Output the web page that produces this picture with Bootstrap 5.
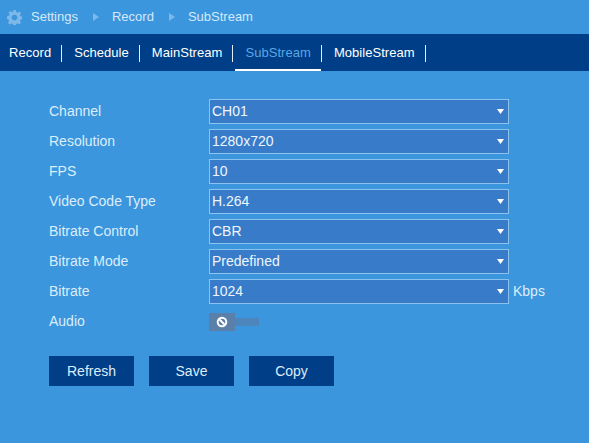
<!DOCTYPE html>
<html lang="en">
<head>
<meta charset="utf-8">
<title>SubStream</title>
<link rel="stylesheet" href="https://cdn.jsdelivr.net/npm/bootstrap@5.3.0/dist/css/bootstrap.min.css">
<style>
html,body{height:100%}
body{background:#3b96dd;color:#e4f1fb;font-family:"Liberation Sans",Arial,sans-serif;font-size:14px;overflow:hidden}
.crumbs{height:34px;padding-left:7px;color:#d5e9f9;font-size:13px}
.crumbs .gear{width:15px;height:15px;margin-right:9px}
.crumbs .sep{width:0;height:0;border-left:6px solid #7cb9ea;border-top:4.5px solid transparent;border-bottom:4.5px solid transparent;margin:0 13px 0 15px}
.tabbar{height:37px;background:#003f87;padding-left:9px}
.tabitem{position:relative;height:37px;color:#fff;text-decoration:none;padding-right:11px;margin-right:12px;font-size:13px;letter-spacing:.05px}
.tabitem::after{content:"";position:absolute;right:0;top:11px;width:1px;height:17px;background:#e6eef7}
.tabitem.on{color:#5aa6e4}
.tabitem.on::before{content:"";position:absolute;left:-10px;right:1px;bottom:0;height:2px;background:#fff}
.formwrap{padding:28px 0 0 49px}
.frow{height:25px;margin-bottom:5px}
.flabel{width:160px;color:#dcedfa;font-size:14px}
.pick{width:300px;height:25px;padding:0 16px 0 2px;border:1px solid #8cc3ee;border-radius:0;background:#387cc9 url("data:image/svg+xml,%3Csvg xmlns='http://www.w3.org/2000/svg' width='8' height='6'%3E%3Cpath d='M0 0h8L4 6z' fill='%23fff'/%3E%3C/svg%3E") no-repeat right 4px center;background-size:7px 5px;color:#eef6fc;font-family:inherit;font-size:14px;line-height:23px;appearance:none;outline:0}
.unit{margin-left:4px;color:#dcedfa}
.toggle{width:50px;height:18px}
.knob{width:26px;height:18px;background:#5a7fa8}
.rail{width:24px;height:8px;background:#4d86bd}
.actions{margin-top:22px}
.actbtn{width:85px;height:30px;background:#003f87;color:#dcedfa;border:0;border-radius:0;font-size:14px;padding:0;margin-right:15px}
</style>
</head>
<body>
<div class="crumbs d-flex align-items-center">
  <svg class="gear" viewBox="0 0 16 16"><path fill="#7fb8e6" fill-rule="evenodd" d="M6.600 0h2.800l.4 2.200 1.300.6 1.900-1.300 2 2-1.300 1.900.6 1.300 2.200.4v2.800l-2.200.4-.6 1.300 1.300 1.900-2 2-1.900-1.300-1.300.6-.4 2.200H6.600l-.4-2.200-1.300-.6L3 15.500l-2-2 1.300-1.900-.6-1.300L0 9.400V6.600l2.200-.4.6-1.300L1.500 3l2-2 1.900 1.300 1.300-.6zM8 5a3 3 0 1 0 0 6 3 3 0 0 0 0-6z"/></svg>
  <span>Settings</span><span class="sep"></span><span>Record</span><span class="sep"></span><span>SubStream</span>
</div>
<nav class="tabbar d-flex align-items-center">
  <a class="tabitem d-flex align-items-center" href="#">Record</a>
  <a class="tabitem d-flex align-items-center" href="#">Schedule</a>
  <a class="tabitem d-flex align-items-center" href="#">MainStream</a>
  <a class="tabitem on d-flex align-items-center" href="#">SubStream</a>
  <a class="tabitem d-flex align-items-center" href="#">MobileStream</a>
</nav>
<form class="formwrap">
  <div class="frow d-flex align-items-center"><label class="flabel">Channel</label><select class="pick"><option>CH01</option></select></div>
  <div class="frow d-flex align-items-center"><label class="flabel">Resolution</label><select class="pick"><option>1280x720</option></select></div>
  <div class="frow d-flex align-items-center"><label class="flabel">FPS</label><select class="pick"><option>10</option></select></div>
  <div class="frow d-flex align-items-center"><label class="flabel">Video Code Type</label><select class="pick"><option>H.264</option></select></div>
  <div class="frow d-flex align-items-center"><label class="flabel">Bitrate Control</label><select class="pick"><option>CBR</option></select></div>
  <div class="frow d-flex align-items-center"><label class="flabel">Bitrate Mode</label><select class="pick"><option>Predefined</option></select></div>
  <div class="frow d-flex align-items-center"><label class="flabel">Bitrate</label><select class="pick"><option>1024</option></select><span class="unit">Kbps</span></div>
  <div class="frow d-flex align-items-center"><label class="flabel">Audio</label>
    <div class="toggle d-flex align-items-center"><span class="knob d-flex align-items-center justify-content-center"><svg width="12" height="12" viewBox="0 0 12 12"><circle cx="6" cy="6" r="4.300" fill="none" stroke="#fff" stroke-width="2"/><path d="M3 3l6 6" stroke="#fff" stroke-width="2"/></svg></span><span class="rail"></span></div>
  </div>
  <div class="actions d-flex">
    <button type="button" class="actbtn">Refresh</button>
    <button type="button" class="actbtn">Save</button>
    <button type="button" class="actbtn">Copy</button>
  </div>
</form>
<script src="https://cdn.jsdelivr.net/npm/bootstrap@5.3.0/dist/js/bootstrap.bundle.min.js"></script>
</body>
</html>
